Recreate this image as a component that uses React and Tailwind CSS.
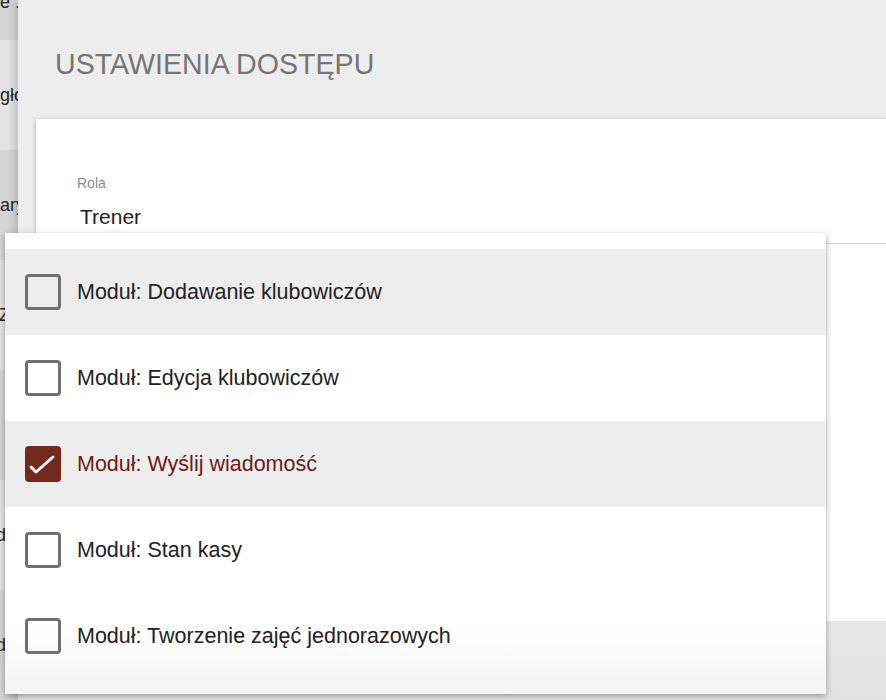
const sideRows = [
    { text: 'Zalogowane :', shift: 'ml-[-88px]', tone: 'bg-[#d5d5d5]' },
    { text: 'Strona główna', shift: 'ml-[-58px]', tone: 'bg-[#e3e3e3]' },
    { text: 'Inwentaryzacja', shift: 'ml-[-53px]', tone: 'bg-[#d5d5d5]' },
    { text: 'Zajęcia', shift: 'ml-[-1px]', tone: 'bg-[#e3e3e3]' },
    { text: '', shift: '', tone: 'bg-[#d5d5d5]' },
    { text: 'Dodaj', shift: 'ml-[-27px]', tone: 'bg-[#e3e3e3]' },
    { text: 'Oddziały', shift: 'ml-[-18px]', tone: 'bg-[#d5d5d5]' },
];

const modules = [
    { label: 'Moduł: Dodawanie klubowiczów', checked: false, shaded: true },
    { label: 'Moduł: Edycja klubowiczów', checked: false, shaded: false },
    { label: 'Moduł: Wyślij wiadomość', checked: true, shaded: true },
    { label: 'Moduł: Stan kasy', checked: false, shaded: false },
    { label: 'Moduł: Tworzenie zajęć jednorazowych', checked: false, shaded: false },
];

const Checkbox = ({ checked }) =>
    checked ? (
        <div className="w-9 h-9 rounded-[4px] bg-[#74291f] flex items-center justify-center shrink-0">
            <svg width="36" height="36" viewBox="0 0 36 36">
                <polyline points="6,21 11,26 28,11" fill="none" stroke="#fff" strokeWidth="3" strokeLinecap="round" strokeLinejoin="round" />
            </svg>
        </div>
    ) : (
        <div className="w-9 h-9 rounded-[4px] border-[3px] border-[#707070] shrink-0" />
    );

const App = () => {
    return (
        <div
            className="relative w-[886px] h-[700px] overflow-hidden flex bg-[#e3e3e3]"
            style={{ fontFamily: '"Liberation Sans", Arial, sans-serif' }}
        >
            {/* Sidebar behind the dialog */}
            <aside className="w-[18px] shrink-0 flex flex-col -mt-[70px] text-[18px] text-[#222]">
                {sideRows.map((row, i) => (
                    <div key={i} className={`h-[110px] flex ${i === 0 ? 'items-end pb-[24px]' : 'items-center'} ${row.tone}`}>
                        <span className={`whitespace-nowrap ${row.shift}`}>{row.text}</span>
                    </div>
                ))}
            </aside>

            {/* Dialog */}
            <section className="relative z-10 flex-1 flex flex-col bg-[#ededed] shadow-[-3px_0_8px_rgba(0,0,0,0.18)]">
                <h1 className="pl-[37px] pt-[50px] h-[119px] text-[28.6px] leading-none text-[#757575]">
                    USTAWIENIA DOSTĘPU
                </h1>

                <div className="ml-[18px] h-[502px] bg-white shadow-[0_1px_4px_rgba(0,0,0,0.3)] pl-[41px] pt-[57px]">
                    <p className="text-[14px] leading-none text-[#8a8a8a]">Rola</p>
                    <div className="mt-[16px] pl-[3px] text-[21px] leading-none text-[#222] h-[37px]">Trener</div>
                    <div className="h-px bg-[#d4d4d4]" />
                </div>

                <div className="flex-1 bg-linear-to-b from-[#e8e8e8] to-[#e2e2e2]" />
            </section>

            {/* Dropdown menu */}
            <div className="absolute z-20 left-[5px] top-[233px] w-[821px] h-[461px] pt-4 bg-linear-to-b from-white from-85% to-[#f3f3f3] shadow-[0_2px_6px_rgba(0,0,0,0.35)]">
                {modules.map((m) => (
                    <div
                        key={m.label}
                        className={`h-[86px] flex items-center gap-4 pl-5 ${m.shaded ? 'bg-[#ededed]' : ''}`}
                    >
                        <Checkbox checked={m.checked} />
                        <span className={`text-[21.5px] ${m.checked ? 'text-[#6d1a14]' : 'text-[#222]'}`}>{m.label}</span>
                    </div>
                ))}
            </div>
        </div>
    );
};

export default App;
